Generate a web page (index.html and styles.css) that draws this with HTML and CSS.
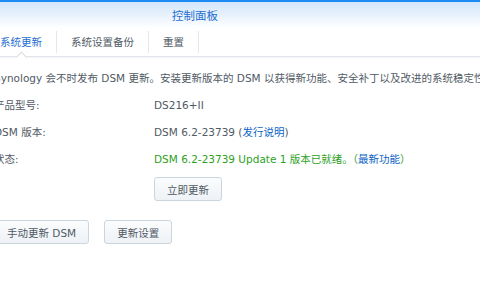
FILE: index.html
```html
<!DOCTYPE html>
<html lang="zh-CN">
<head>
    <meta charset="UTF-8">
    <title>控制面板</title>
    <link rel="stylesheet" href="styles.css">
</head>
<body>
    <div class="header">
        <div class="title">控制面板</div>
    </div>

    <div class="tabs">
        <div class="tab active">系统更新</div>
        <div class="tab">系统设置备份</div>
        <div class="tab">重置</div>
    </div>

    <div class="content">
        <div class="desc">Synology 会不时发布 DSM 更新。安装更新版本的 DSM 以获得新功能、安全补丁以及改进的系统稳定性。</div>

        <div class="row">
            <div class="label">产品型号:</div>
            <div class="value">DS216+II</div>
        </div>
        <div class="row">
            <div class="label">DSM 版本:</div>
            <div class="value">DSM 6.2-23739 (<a class="link">发行说明</a>)</div>
        </div>
        <div class="row">
            <div class="label">状态:</div>
            <div class="value ok">DSM 6.2-23739 Update 1 版本已就绪。（<a class="link">最新功能</a>）</div>
        </div>
        <div class="row">
            <div class="label"></div>
            <div class="value"><button>立即更新</button></div>
        </div>

        <div class="actions">
            <button>手动更新 DSM</button>
            <button>更新设置</button>
        </div>
    </div>
</body>
</html>
```

FILE: styles.css
```css
body {
    margin: 0;
    font-family: "DejaVu Sans", "Noto Sans CJK SC", sans-serif;
    font-size: 10.5px;
    color: #505a64;
    background: #fff;
    overflow: hidden;
}
.header {
    height: 26px;
    border-top: 2px solid #1c8cf2;
    background: linear-gradient(#d3e6fb, #eef5fd 65%, #fff);
}
.title {
    padding-left: 172px;
    line-height: 28px;
    font-size: 11.5px;
    color: #1f6fd0;
}
.tabs {
    display: flex;
    align-items: center;
    height: 28px;
    margin-left: -14px;
    border-bottom: 1px solid #dfe4ea;
    box-shadow: 0 1px 2px rgba(0, 0, 0, 0.05);
}
.tab {
    position: relative;
    padding: 0 14px;
    line-height: 22px;
    border-right: 1px solid #e3e8ee;
}
.tab.active {
    color: #1f6fd0;
}
.tab.active::after {
    content: "";
    position: absolute;
    left: 50%;
    bottom: -7px;
    width: 6px;
    height: 6px;
    margin-left: -3px;
    background: #fff;
    border-left: 1px solid #d6dce2;
    border-top: 1px solid #d6dce2;
    transform: rotate(45deg);
}
.content {
    margin-left: -6px;
    padding-top: 12px;
}
.desc {
    white-space: nowrap;
    line-height: 18px;
}
.row {
    display: flex;
    margin-top: 9px;
    line-height: 18px;
}
.label {
    width: 160px;
    flex: none;
}
.value {
    white-space: nowrap;
}
.ok {
    color: #2e9f1e;
}
.link {
    color: #0b63c6;
}
.row:last-of-type {
    margin-top: 7px;
}
button {
    height: 24px;
    padding: 0 12px;
    font-family: inherit;
    font-size: 10.5px;
    color: #505a64;
    background: linear-gradient(#fbfcfd, #eef2f6);
    border: 1px solid #cbd5de;
    border-radius: 3px;
}
.actions {
    display: flex;
    gap: 15px;
    margin-top: 19px;
}
```
